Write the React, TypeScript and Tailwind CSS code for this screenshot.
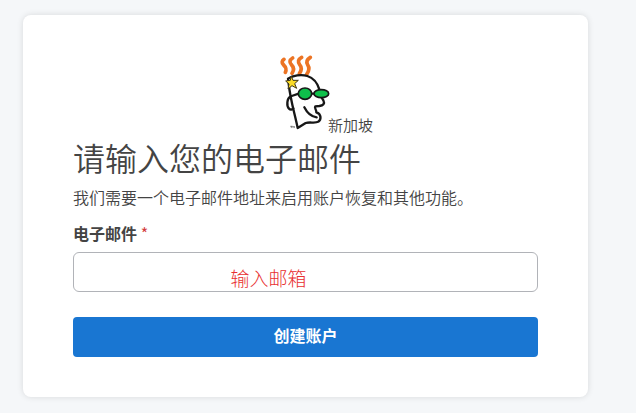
import { useState } from "react";

function Logo() {
  return (
    <svg
      viewBox="-96 15 270 228"
      className="mb-1 h-[76px] w-[90px] shrink-0 overflow-visible"
      fill="none"
      strokeLinecap="round"
      strokeLinejoin="round"
      role="img"
      aria-label="Logo"
    >
      {/* Hair */}
      <g stroke="#ec7424" strokeWidth="11">
        <path d="M42 28c-7 5-7 10-2 16 8 8 11 13 6 23" />
        <path d="M68 24c-10 6-10 13-4 20 8 8 9 16 2 26" />
        <path d="M95 22c-11 6-12 14-6 22 7 8 6 17-1 27" />
        <path d="M121 22c-11 7-13 14-8 22 6 9 5 18-3 29" />
      </g>

      {/* Face and ear */}
      <path
        d="M54 86C68 76 94 72 112 78C130 84 142 98 148 118L152 138L160 151C165 161 160 166 148 168L136 169C132 174 140 180 139 187C155 192 154 209 145 215C137 221 119 215 107 219L83 234C74 190 61 150 56 101Z"
        fill="#fff"
        stroke="#171717"
        strokeWidth="7"
      />
      <path d="M63 139C49 145 50 169 57 176C61 180 67 179 70 175" stroke="#171717" strokeWidth="7" />
      <path d="M103 172C111 188 121 200 140 202" stroke="#171717" strokeWidth="7" />

      {/* Glasses */}
      <path d="M65 138L86 131M124 131H134" stroke="#171717" strokeWidth="7" />
      <ellipse cx="105" cy="131" rx="20" ry="17" fill="#0fc04b" stroke="#171717" strokeWidth="5" />
      <ellipse cx="154" cy="131" rx="22" ry="12" fill="#0fc04b" stroke="#171717" strokeWidth="5" />

      {/* Star */}
      <path
        d="M64 79L69 91L85 91L74 101L80 115L66 107L54 117L57 102L47 93L60 91Z"
        fill="#fbdc28"
        stroke="#3d3517"
        strokeWidth="3"
      />
      <path d="M62 229H67M64 229V233M69 233V229L71 231L73 229V233" stroke="#555" strokeWidth="2" />
    </svg>
  );
}

export default function App() {
  const [email, setEmail] = useState("输入邮箱");

  return (
    <main className="min-h-screen bg-[#f5f7f9] pt-[15px] pr-12 pb-4 pl-[23px] font-['Noto_Sans_CJK_SC',sans-serif] text-[#444]">
      <section className="rounded-lg bg-white px-[50px] py-10 shadow-[0_0_6px_rgba(0,0,0,0.12)]">
        <div className="flex items-end justify-center">
          <Logo />
          <span className="text-[15px] leading-5 font-[350]">新加坡</span>
        </div>

        <h1 className="mt-0.5 text-[32px] leading-10 font-[350]">请输入您的电子邮件</h1>
        <p className="mt-2 text-base leading-6 font-[350]">
          我们需要一个电子邮件地址来启用账户恢复和其他功能。
        </p>

        <form onSubmit={(e) => e.preventDefault()}>
          <label htmlFor="email" className="mt-3.5 block text-base leading-5 font-bold">
            电子邮件 <span className="font-normal text-[#d33c3c]">*</span>
          </label>
          <input
            id="email"
            type="text"
            required
            value={email}
            onChange={(e) => setEmail(e.target.value)}
            className="mt-[9px] block h-10 w-full rounded-md border border-[#b1b3b8] bg-white pt-2.5 pr-[74px] text-center text-[19px] leading-6 font-light text-[#e83030] outline-none"
          />
          <button
            type="submit"
            className="mt-[25px] block h-10 w-full rounded-sm bg-[#1976d2] pb-1 text-base leading-6 font-bold text-white"
          >
            创建账户
          </button>
        </form>
      </section>
    </main>
  );
}
